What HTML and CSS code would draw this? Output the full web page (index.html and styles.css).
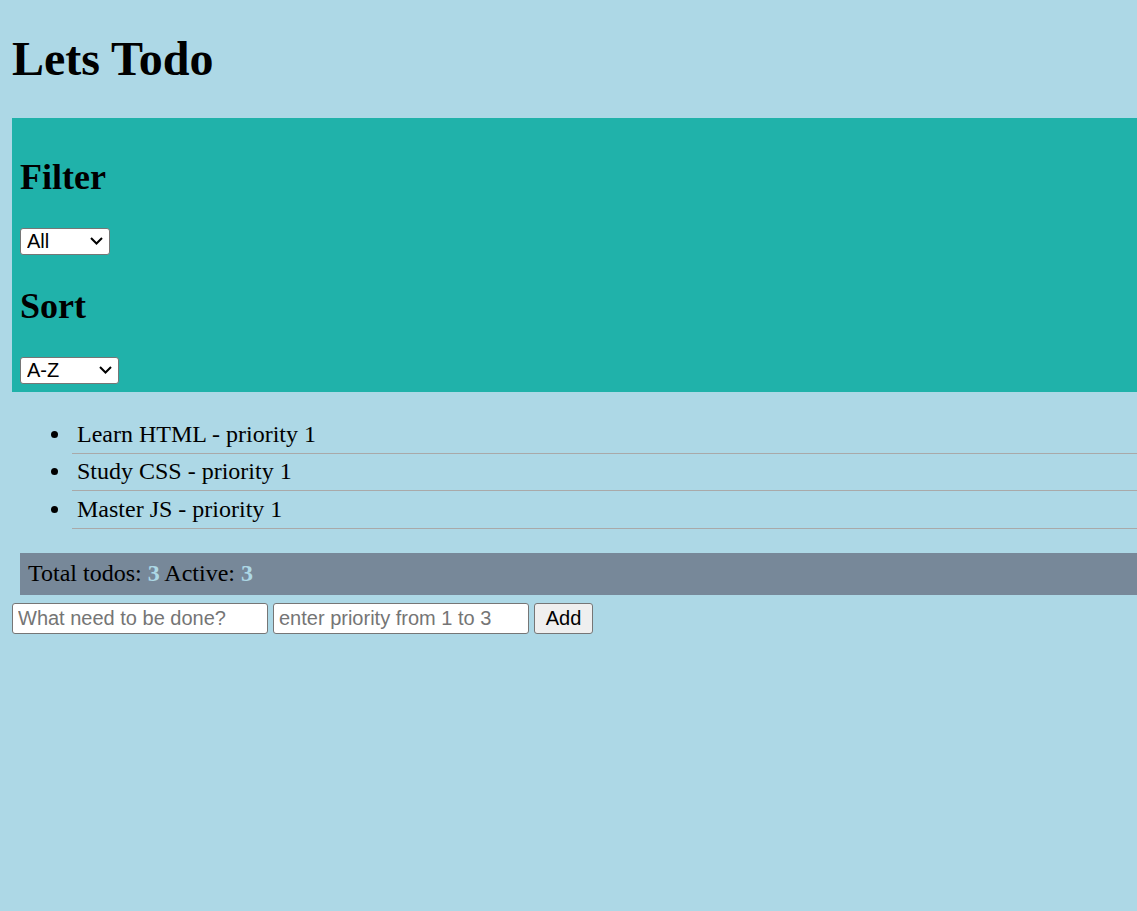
FILE: index.html
```html
<!DOCTYPE html>
<html lang="en">
<head>
<meta charset="utf-8">
<title>Lets Todo</title>
<link rel="stylesheet" href="styles.css">
</head>
<body>
<h1 class="title">Lets Todo</h1>
<div class="panel">
  <h2 class="panel-heading">Filter</h2>
  <div class="select-wrap select-filter">
    <select class="control">
      <option>All</option>
      <option>Active</option>
      <option>Done</option>
    </select>
    <svg class="chevron" width="13" height="8" viewBox="0 0 13 8" aria-hidden="true"><path d="M1 1l5.5 5.5L12 1" fill="none" stroke="#000" stroke-width="2"/></svg>
  </div>
  <h2 class="panel-heading">Sort</h2>
  <div class="select-wrap select-sort">
    <select class="control">
      <option>A-Z</option>
      <option>Z-A</option>
      <option>Priority</option>
    </select>
    <svg class="chevron" width="13" height="8" viewBox="0 0 13 8" aria-hidden="true"><path d="M1 1l5.5 5.5L12 1" fill="none" stroke="#000" stroke-width="2"/></svg>
  </div>
</div>
<ul class="todo-list">
  <li class="todo-item">Learn HTML - priority 1</li>
  <li class="todo-item">Study CSS - priority 1</li>
  <li class="todo-item">Master JS - priority 1</li>
</ul>
<div class="stats">Total todos: <strong class="count">3</strong> Active: <strong class="count">3</strong></div>
<form class="add-form">
  <input class="field" type="text" placeholder="What need to be done?">
  <input class="field" type="text" placeholder="enter priority from 1 to 3">
  <button class="add-btn" type="button">Add</button>
</form>
</body>
</html>
```
FILE: styles.css
```css
html {
  background: #add8e6;
}
body {
  margin: 0;
  padding: 0 0 12px 12px;
  font-family: "Liberation Serif", "Times New Roman", serif;
  font-size: 24px;
  color: #000;
}
.title {
  font-size: 48px;
  font-weight: bold;
  margin: 31px 0 32px;
}
.panel {
  background: #20b2aa;
  padding: 8px;
}
.panel-heading {
  font-size: 36px;
  font-weight: bold;
  margin: 30px 0;
}
.select-wrap {
  position: relative;
  margin-top: 2px;
  height: 27px;
}
.select-filter {
  width: 90px;
}
.select-sort {
  width: 99px;
}
.control {
  display: block;
  box-sizing: border-box;
  width: 100%;
  height: 27px;
  -webkit-appearance: none;
  appearance: none;
  font-family: "Liberation Sans", Arial, sans-serif;
  font-size: 20px;
  line-height: 25px;
  color: #000;
  background: #fff;
  border: 1px solid #767676;
  border-radius: 3px;
  padding: 0 0 0 6px;
  margin: 0;
}
.chevron {
  position: absolute;
  right: 7px;
  top: 9px;
  pointer-events: none;
}
.todo-list {
  margin: 24px 0;
  padding-left: 60px;
}
.todo-item {
  padding: 4.75px 5px;
  border-bottom: 1px solid #a9a9a9;
}
.stats {
  background: #778899;
  margin: 0 0 8px 8px;
  padding: 7.5px 8px;
}
.count {
  color: #add8e6;
}
.add-form {
  display: flex;
  gap: 5.5px;
  margin: 0;
}
.field {
  box-sizing: border-box;
  width: 255.5px;
  height: 31.5px;
  font-family: "Liberation Sans", Arial, sans-serif;
  font-size: 20px;
  padding: 0 5px;
  border: 1px solid #767676;
  border-radius: 3px;
  background: #fff;
  color: #000;
  margin: 0;
}
.field::placeholder {
  color: #757575;
}
.add-btn {
  box-sizing: border-box;
  width: 59px;
  height: 31.5px;
  font-family: "Liberation Sans", Arial, sans-serif;
  font-size: 20px;
  padding: 0;
  border: 1px solid #767676;
  border-radius: 3px;
  background: #efefef;
  color: #000;
  margin: 0;
}
```
